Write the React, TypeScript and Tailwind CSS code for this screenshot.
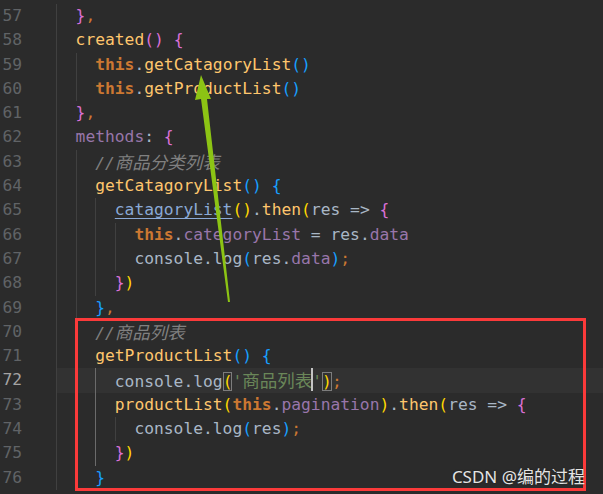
import React from 'react';

type Tok = [string, string?];
type Line = { n: number; indent: number; toks: Tok[]; active?: boolean };

const P = 'text-[#a9b7c6]';
const FN = 'text-[#ffc66d]';
const KW = 'text-[#cc7832] font-bold';
const PR = 'text-[#9876aa]';
const CM = 'text-[#808080] italic';
const ST = 'text-[#6a8759]';
const PU = 'text-[#cc7832]';
const B1 = 'text-[#ffd700]';
const B2 = 'text-[#da70d6]';
const B3 = 'text-[#179fff]';
const LK = 'text-[#8aa9d6] underline underline-offset-[3px]';
const CJK = '[font-family:"Noto_Sans_CJK_SC",sans-serif] text-[17.5px]';
const BOX = 'ring-1 ring-inset ring-[#7d7d7d]';
const CUR = 'CURSOR';

const lines: Line[] = [
  { n: 57, indent: 2, toks: [['}', B2], [',', PU]] },
  { n: 58, indent: 2, toks: [['created', FN], ['(', B2], [')', B2], [' '], ['{', B2]] },
  { n: 59, indent: 4, toks: [['this', KW], ['.', P], ['getCatagoryList', FN], ['()', B3]] },
  { n: 60, indent: 4, toks: [['this', KW], ['.', P], ['getProductList', FN], ['()', B3]] },
  { n: 61, indent: 2, toks: [['}', B2], [',', PU]] },
  { n: 62, indent: 2, toks: [['methods', PR], [':', P], [' '], ['{', B2]] },
  { n: 63, indent: 4, toks: [['//', CM], ['商品分类列表', CM + ' ' + CJK]] },
  { n: 64, indent: 4, toks: [['getCatagoryList', FN], ['()', B3], [' '], ['{', B3]] },
  {
    n: 65,
    indent: 6,
    toks: [['catagoryList', LK], ['()', B1], ['.', P], ['then', FN], ['(', B1], ['res', P], [' => ', P], ['{', B2]],
  },
  {
    n: 66,
    indent: 8,
    toks: [['this', KW], ['.', P], ['categoryList', PR], [' = ', P], ['res', P], ['.', P], ['data', PR]],
  },
  {
    n: 67,
    indent: 8,
    toks: [['console', P], ['.', P], ['log', P], ['(', B3], ['res', P], ['.', P], ['data', PR], [')', B3], [';', PU]],
  },
  { n: 68, indent: 6, toks: [['}', B2], [')', B1]] },
  { n: 69, indent: 4, toks: [['}', B3], [',', PU]] },
  { n: 70, indent: 4, toks: [['//', CM], ['商品列表', CM + ' ' + CJK]] },
  { n: 71, indent: 4, toks: [['getProductList', FN], ['()', B3], [' '], ['{', B3]] },
  {
    n: 72,
    indent: 6,
    active: true,
    toks: [
      ['console', P],
      ['.', P],
      ['log', P],
      ['(', B1 + ' ' + BOX],
      ["'", ST],
      ['商品列表', ST + ' ' + CJK],
      ['', CUR],
      ["'", ST],
      [')', B1 + ' ' + BOX],
      [';', PU],
    ],
  },
  {
    n: 73,
    indent: 6,
    toks: [
      ['productList', FN],
      ['(', B1],
      ['this', KW],
      ['.', P],
      ['pagination', PR],
      [')', B1],
      ['.', P],
      ['then', FN],
      ['(', B1],
      ['res', P],
      [' => ', P],
      ['{', B2],
    ],
  },
  { n: 74, indent: 8, toks: [['console', P], ['.', P], ['log', P], ['(', B3], ['res', P], [')', B3], [';', PU]] },
  { n: 75, indent: 6, toks: [['}', B2], [')', B1]] },
  { n: 76, indent: 4, toks: [['}', B3]] },
];

// guide at col 4 is highlighted for the block that holds the cursor
const isActiveGuide = (n: number, i: number) => i === 2 && n >= 72 && n <= 75;

const CodeLine: React.FC<{ line: Line }> = ({ line }) => {
  const guides = Array.from({ length: line.indent / 2 });
  return (
    <div className="flex h-[24.3px] leading-[24.3px]">
      <div
        className={
          line.active
            ? 'w-[56px] shrink-0 text-right pr-[34px] text-[#a4a3a3]'
            : 'w-[56px] shrink-0 text-right pr-[34px] text-[#606366]'
        }
      >
        {line.n}
      </div>
      <div className={line.active ? 'flex flex-1 bg-[#323232]' : 'flex flex-1'}>
        {guides.map((_, i) => (
          <span
            key={i}
            className={
              isActiveGuide(line.n, i)
                ? 'w-[19.6px] shrink-0 border-l border-[#6b6b6b]'
                : 'w-[19.6px] shrink-0 border-l border-[#404040]'
            }
          />
        ))}
        <span className="whitespace-pre">
          {line.toks.map(([text, cls], i) =>
            cls === CUR ? (
              <span key={i} className="relative">
                <span className="absolute left-[-1px] top-[-4px] w-[2px] h-[23px] bg-[#c4c4c4]" />
              </span>
            ) : (
              <span key={i} className={cls ?? P}>
                {text}
              </span>
            )
          )}
        </span>
      </div>
    </div>
  );
};

export default function App() {
  return (
    <div className="relative w-[603px] h-[494px] overflow-hidden bg-[#2b2b2b] text-[16.3px] [font-family:'DejaVu_Sans_Mono',monospace]">
      <div className="pt-[4px]">
        {lines.map((l) => (
          <CodeLine key={l.n} line={l} />
        ))}
      </div>

      {/* annotation box */}
      <div className="absolute left-[75px] top-[318px] w-[511px] h-[173px] border-[3px] border-[#fb3a3a]" />

      {/* annotation arrow */}
      <svg className="absolute inset-0 pointer-events-none" width="603" height="494" viewBox="0 0 603 494">
        <polygon
          points="201,75 211,99 207,99 230,302 228,302 201,99 195,100"
          fill="#8cc414"
        />
      </svg>

      <div className="absolute right-[18px] top-[464px] text-[17px] text-[#e4e4e4] [font-family:'Noto_Sans','Noto_Sans_CJK_SC',sans-serif] [text-shadow:0_0_2px_rgba(0,0,0,0.4)]">
        CSDN @编的过程
      </div>
    </div>
  );
}
